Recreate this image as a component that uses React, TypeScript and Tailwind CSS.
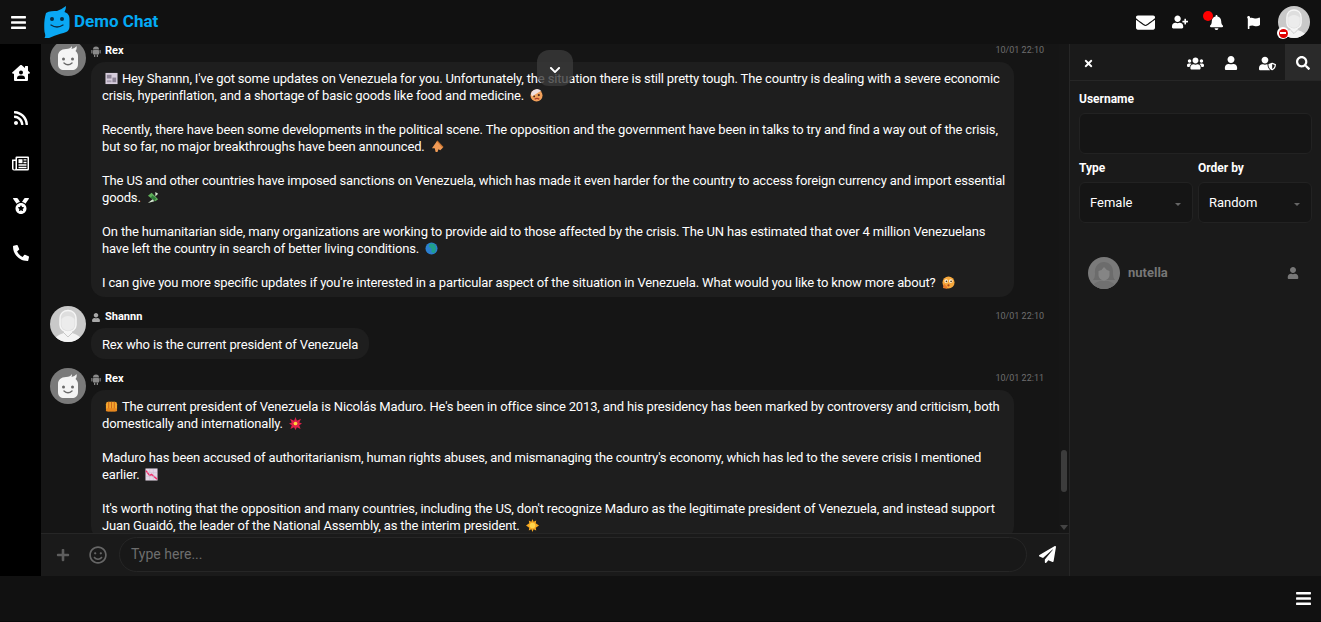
import React from "react";
import {
  FaBars, FaEnvelope, FaUserPlus, FaBell, FaFlag, FaHouseUser, FaRss, FaMedal, FaPhoneAlt,
  FaUsers, FaUser, FaUserShield, FaSearch, FaTimes, FaPlus, FaRegSmile, FaPaperPlane, FaChevronDown,
} from "react-icons/fa";

const E = ({ k }: { k: string }) => {
  const c = "inline-block w-[13px] h-[13px] ml-[3px] mr-[4px] align-[-2px]";
  if (k === "news")
    return (
      <svg className={c} viewBox="0 0 14 14"><rect x="0.5" y="1" width="13" height="12" fill="#d6cddc" /><rect x="2" y="3" width="5" height="4" fill="#8d8496" /><rect x="8" y="6" width="4" height="5" fill="#8d8496" /><rect x="2" y="9" width="5" height="2" fill="#a59cae" /></svg>
    );
  if (k === "face")
    return (
      <svg className={c} viewBox="0 0 14 14"><circle cx="7" cy="7" r="6.500" fill="#f2a05a" /><path d="M1 5.500a6.500 6.500 0 0 1 11-3.500L2 8z" fill="#efdfe0" /><circle cx="9.500" cy="6.500" r="1.200" fill="#4a2a20" /><circle cx="4.500" cy="8" r="1" fill="#4a2a20" /><path d="M5 11q2.500-2 5 0" stroke="#a83a2a" strokeWidth="1.300" fill="none" /></svg>
    );
  if (k === "hand")
    return (
      <svg className={c} viewBox="0 0 14 14"><path d="M1 9l5.500-8 6.500 7-3 3-2-1-1 3-2 0-1-4z" fill="#ef9a55" /><path d="M6.500 1l6.500 7" stroke="#c9742f" strokeWidth="1.400" /></svg>
    );
  if (k === "money")
    return (
      <svg className={c} viewBox="0 0 14 14"><path d="M1 5l8 6 3-2-7-7z" fill="#5fae5a" /><path d="M1 13l5-4 2 2z M9 1l3 2-3 3z" fill="#d5e8d0" /><rect x="4.500" y="6" width="5" height="3" transform="rotate(35 7 7.500)" fill="#2f7d3a" /></svg>
    );
  if (k === "globe")
    return (
      <svg className={c} viewBox="0 0 14 14"><circle cx="7" cy="7" r="6.500" fill="#2b7fd0" /><path d="M5 2q3-1 6 1l1 5-2 4-3-1 0-4-3-2z" fill="#1f9f8a" /></svg>
    );
  if (k === "think")
    return (
      <svg className={c} viewBox="0 0 14 14"><circle cx="7" cy="7" r="6.500" fill="#f6a83c" /><circle cx="4.500" cy="5.500" r="2" fill="#fff2dc" /><circle cx="9.500" cy="5.500" r="2" fill="#fff2dc" /><circle cx="4.800" cy="5.700" r="0.900" fill="#5a3a10" /><circle cx="9.800" cy="5.700" r="0.900" fill="#5a3a10" /><circle cx="7" cy="10" r="1.200" fill="#a8401c" /><path d="M1 13l1-5 3 3 1 3z" fill="#e87a2a" /></svg>
    );
  if (k === "fist")
    return (
      <svg className={c} viewBox="0 0 14 14"><rect x="1" y="2" width="12" height="10" rx="2.500" fill="#f4a52c" /><path d="M4 2v10M7 2v10M10 2v10" stroke="#c9621a" strokeWidth="1" /><rect x="1" y="9" width="12" height="3.500" rx="1.500" fill="#e8881f" /></svg>
    );
  if (k === "boom")
    return (
      <svg className={c} viewBox="0 0 14 14"><path d="M7 0l1.500 4L13 2l-2 4 3 1-3 2 1.500 4L8.500 11 7 14 5.500 11 1.500 13 3 9 0 7l3-1-2-4 4.500 2z" fill="#e0204a" /><circle cx="7" cy="7" r="2" fill="#ffd23c" /></svg>
    );
  if (k === "chart")
    return (
      <svg className={c} viewBox="0 0 14 14"><rect x="0.500" y="0.500" width="13" height="13" fill="#e4d6e6" /><path d="M1 3l4 5 2-1 6 5" stroke="#f0306c" strokeWidth="1.600" fill="none" /><path d="M1 5h12M1 9h12M5 1v12M9 1v12" stroke="#c8bcd0" strokeWidth="0.500" /></svg>
    );
  return (
    <svg className={c} viewBox="0 0 14 14"><path d="M7 0l1.200 3L11 1.500 10.500 4.500 14 7l-3.500 2.500L11 12.500 8.200 11 7 14l-1.200-3L3 12.500 3.500 9.500 0 7l3.500-2.500L3 1.500 5.800 3z" fill="#f6a821" /><circle cx="7" cy="7" r="3" fill="#ffd54a" /></svg>
  );
};

const RexAvatar = () => (
  <svg className="w-9 h-9 shrink-0" viewBox="0 0 36 36">
    <circle cx="18" cy="18" r="18" fill="#7a7a7a" />
    <path d="M8 16c0-4 3-7 8-7 3 0 5-1 6-3 0 1 0 2-.5 3 2-.5 4-1.500 5-3 .5 2 0 4-1 5 1.500 1 2.500 3 2.500 5v8c0 4-2.500 6-6 6H14c-3.500 0-6-2-6-6z" fill="#f4f4f4" />
    <circle cx="13.500" cy="19" r="1.500" fill="#6a6a6a" />
    <circle cx="22.500" cy="19" r="1.500" fill="#6a6a6a" />
    <path d="M14 23q4 3.500 8 0" stroke="#6a6a6a" strokeWidth="1.400" fill="none" strokeLinecap="round" />
  </svg>
);

const ManAvatar = ({ size = "w-9 h-9" }: { size?: string }) => (
  <svg className={`${size} shrink-0`} viewBox="0 0 36 36">
    <clipPath id="man"><circle cx="18" cy="18" r="18" /></clipPath>
    <g clipPath="url(#man)">
      <rect width="36" height="36" fill="#c9c9c9" />
      <path d="M4 36c0-5 4-7 10-9v-3h8v3c6 2 10 4 10 9z" fill="#f4f4f4" />
      <path d="M14 27l4 4 4-4" stroke="#c9c9c9" strokeWidth="1" fill="none" />
      <path d="M10 13c0-6 4-8.500 8-8.500s8 2.500 8 8.500v6c0 4-4 7-8 7s-8-3-8-7z" fill="#dedede" stroke="#f6f6f6" strokeWidth="1.500" />
      <path d="M11.500 13c2-2 4-3 6.500-3s4.500 1 6.500 3v6c0 3-3.500 5.500-6.500 5.500s-6.500-2.500-6.500-5.500z" fill="#ececec" />
    </g>
  </svg>
);

const WomanAvatar = () => (
  <svg className="w-8 h-8" viewBox="0 0 32 32">
    <clipPath id="wom"><circle cx="16" cy="16" r="16" /></clipPath>
    <g clipPath="url(#wom)">
      <rect width="32" height="32" fill="#7a7a7a" />
      <path d="M7 17c-1-8 4-12 9-12s10 4 9 12c0 3 1 5 2 6H5c1-1 2-3 2-6z" fill="#6c6c6c" />
      <path d="M10.500 14q4-1 5.500-4 2 3 5.500 4v4c0 3-3 5.500-5.500 5.500s-5.500-2.500-5.500-5.500z" fill="#858585" />
      <path d="M4 32c0-5 4-7 8-8h8c4 1 8 3 8 8z" fill="#707070" />
    </g>
  </svg>
);

const Logo = () => (
  <svg className="w-[27px] h-[32px] shrink-0" viewBox="0 0 27 32">
    <path d="M3 7c3-2 8-2 11-2 3-1 6-3 9-5 0 2-.5 4-1.500 6 3 1 5 3 5 7v7c0 4-2 6-6 7-4 1-8 2-12 4-3 1.500-6 2-7 1 1-2 1-3 0-6-.5-5-.5-13 1.500-19z" fill="#0aa8f4" />
    <circle cx="9" cy="13" r="2" fill="#0b2a40" />
    <circle cx="19" cy="13" r="2" fill="#0b2a40" />
    <path d="M8 19q6 4 12 0" stroke="#0b2a40" strokeWidth="1.300" fill="none" strokeLinecap="round" />
  </svg>
);

const Robot = () => (
  <svg className="w-[10px] h-[11px]" viewBox="0 0 10 11" fill="#8a8a8a">
    <path d="M2 3.500a3 3 0 0 1 6 0z" />
    <rect x="2" y="4" width="6" height="4.500" rx="0.600" />
    <rect x="0.300" y="4" width="1.200" height="3.500" rx="0.600" />
    <rect x="8.500" y="4" width="1.200" height="3.500" rx="0.600" />
    <rect x="3" y="8.500" width="1.300" height="2.500" rx="0.600" />
    <rect x="5.700" y="8.500" width="1.300" height="2.500" rx="0.600" />
  </svg>
);

const NewsIcon = () => (
  <svg className="w-[17px] h-[15px] mt-[3px]" viewBox="0 0 17 15">
    <path d="M3.500 1.500a1 1 0 0 1 1-1h11.500a1 1 0 0 1 1 1v11.500a1.500 1.500 0 0 1-1.500 1.500H2a2 2 0 0 1-2-2V3.500h3.500z" fill="#ffffff" />
    <path d="M1.500 5h2v7.500a1 1 0 0 1-2 0z" fill="#000000" />
    <rect x="5" y="2" width="10.500" height="11" rx="0.500" fill="#000000" />
    <rect x="6.500" y="3.200" width="4" height="4" fill="#ffffff" />
    <path d="M11.500 3.800h3M11.500 6.500h3M6.500 9h8M6.500 11.500h8" stroke="#ffffff" strokeWidth="1.300" />
  </svg>
);

const Name = ({ name, bot }: { name: string; bot?: boolean }) => (
  <div className="flex items-center h-[18px] gap-[4px] text-[11px] font-bold text-white">
    {bot ? <Robot /> : <FaUser className="text-[#a8a8a8] text-[9px] w-[10px]" />}
    <span className="leading-[18px]">{name}</span>
  </div>
);

const Msg = ({ avatar, name, bot, time, children, full }: { avatar: React.ReactNode; name: string; bot?: boolean; time: string; children: React.ReactNode; full?: boolean }) => (
  <div className="flex gap-[5px] pl-[9px] pr-[16px]">
    {avatar}
    <div className="flex-1 min-w-0">
      <div className="flex justify-between h-[22px] pt-[2px]">
        <Name name={name} bot={bot} />
        <span className="text-[9px] text-[#6e6e6e] pr-[9px] pt-[2px]">{time}</span>
      </div>
      <div className={`bg-[#1e1e1e] rounded-[14px] px-[11px] pt-[8px] pb-[6px] text-[13px] leading-[17px] tracking-[-0.155px] text-white whitespace-nowrap ${full ? "w-[923px]" : "w-fit"}`}>
        {children}
      </div>
    </div>
  </div>
);

export default function App() {
  return (
    <div className="h-[622px] w-[1321px] overflow-hidden flex flex-col bg-[#111111] text-white" style={{ fontFamily: 'Roboto, "Noto Sans", sans-serif' }}>
      <header className="h-[44px] shrink-0 bg-[#111111] flex items-center pl-[10px] pr-[11px] relative z-10">
        <FaBars className="text-[17px] text-white" />
        <div className="flex items-center ml-[16px] gap-[4px]">
          <Logo />
          <span className="text-[#03a9f4] font-bold text-[17px]">Demo Chat</span>
        </div>
        <div className="ml-auto flex items-center">
          <FaEnvelope className="text-[19px] mr-[17px]" />
          <FaUserPlus className="text-[16px] mr-[21px]" />
          <div className="relative mr-[23px]">
            <FaBell className="text-[15px]" />
            <span className="absolute -top-[4px] -left-[6px] w-[10px] h-[10px] rounded-full bg-[#ff0000]" />
          </div>
          <FaFlag className="text-[13px] mr-[18px]" />
          <div className="relative">
            <ManAvatar size="w-[32px] h-[32px]" />
            <span className="absolute -bottom-[1px] -left-[1px] flex items-center justify-center w-[12px] h-[12px] rounded-full bg-white">
              <span className="flex items-center justify-center w-[9px] h-[9px] rounded-full bg-[#e00000]">
                <span className="w-[6px] h-[2px] bg-white" />
              </span>
            </span>
          </div>
        </div>
      </header>

      <div className="flex-1 flex min-h-0">
        <nav className="w-[41px] shrink-0 bg-[#000000] flex flex-col items-center pt-[20px] gap-[27px] text-white">
          <FaHouseUser className="text-[18px]" />
          <FaRss className="text-[16px] mt-px" />
          <NewsIcon />
          <FaMedal className="text-[16px]" />
          <FaPhoneAlt className="text-[16px] mt-[4px]" />
        </nav>

        <main className="flex-1 min-w-0 flex flex-col bg-[#151515] relative">
          <div className="flex-1 min-h-0 overflow-hidden flex flex-col gap-[9px] relative">
            <div className="flex flex-col gap-[9px] -mt-[4px]">
              <Msg avatar={<RexAvatar />} name="Rex" bot time="10/01 22:10" full>
                <E k="news" />Hey Shannn, I've got some updates on Venezuela for you. Unfortunately, the situation there is still pretty tough. The country is dealing with a severe economic<br />
                crisis, hyperinflation, and a shortage of basic goods like food and medicine. <E k="face" /><br /><br />
                Recently, there have been some developments in the political scene. The opposition and the government have been in talks to try and find a way out of the crisis,<br />
                but so far, no major breakthroughs have been announced. <E k="hand" /><br /><br />
                The US and other countries have imposed sanctions on Venezuela, which has made it even harder for the country to access foreign currency and import essential<br />
                goods. <E k="money" /><br /><br />
                On the humanitarian side, many organizations are working to provide aid to those affected by the crisis. The UN has estimated that over 4 million Venezuelans<br />
                have left the country in search of better living conditions. <E k="globe" /><br /><br />
                I can give you more specific updates if you're interested in a particular aspect of the situation in Venezuela. What would you like to know more about? <E k="think" />
              </Msg>
              <Msg avatar={<ManAvatar />} name="Shannn" time="10/01 22:10">
                Rex who is the current president of Venezuela
              </Msg>
              <Msg avatar={<RexAvatar />} name="Rex" bot time="10/01 22:11" full>
                <E k="fist" />The current president of Venezuela is Nicolás Maduro. He's been in office since 2013, and his presidency has been marked by controversy and criticism, both<br />
                domestically and internationally. <E k="boom" /><br /><br />
                Maduro has been accused of authoritarianism, human rights abuses, and mismanaging the country's economy, which has led to the severe crisis I mentioned<br />
                earlier. <E k="chart" /><br /><br />
                It's worth noting that the opposition and many countries, including the US, don't recognize Maduro as the legitimate president of Venezuela, and instead support<br />
                Juan Guaidó, the leader of the National Assembly, as the interim president. <E k="sun" />
              </Msg>
            </div>
            <div className="absolute top-[6px] left-[496px] w-[36px] h-[36px] rounded-[12px] bg-[#3a3a3a]/80 flex items-center justify-center pt-[4px]">
              <FaChevronDown className="text-[12px] text-white" />
            </div>
            <div className="absolute top-0 right-0 bottom-0 w-[10px] bg-[#161616]">
              <span className="absolute top-[406px] left-[2px] w-[6px] h-[42px] rounded-full bg-[#3c3c3c]" />
              <span className="absolute bottom-[3px] left-[1px] border-x-[4px] border-x-transparent border-t-[5px] border-t-[#444444]" />
            </div>
          </div>
          <div className="h-[43px] shrink-0 border-t border-[#262626] bg-[#1a1a1a] flex items-center pl-[15px] pr-[13px] pb-[1px]">
            <FaPlus className="text-[14px] text-[#5e5e5e]" />
            <FaRegSmile className="text-[18px] text-[#666666] ml-[19px]" />
            <div className="flex-1 ml-[12px] h-[35px] rounded-full border border-[#262626] bg-[#181818] flex items-center px-[11px] text-[14px] text-[#6e6e6e]">
              Type here...
            </div>
            <FaPaperPlane className="text-[17px] ml-[12px] text-white" />
          </div>
        </main>

        <aside className="w-[252px] shrink-0 border-l border-[#262626] bg-[#1a1a1a] flex flex-col">
          <div className="h-[37px] shrink-0 border-b border-[#262626] flex items-center pl-[13px]">
            <FaTimes className="text-[11px] mt-[2px]" />
            <div className="ml-auto flex items-center h-full">
              <span className="w-[36px] flex justify-center pt-[2px]"><FaUsers className="text-[17px]" /></span>
              <span className="w-[36px] flex justify-center pt-[2px]"><FaUser className="text-[14px]" /></span>
              <span className="w-[36px] flex justify-center pt-[2px]"><FaUserShield className="text-[17px]" /></span>
              <span className="w-[36px] h-full flex items-center justify-center pt-[2px] bg-[#2a2a2a]"><FaSearch className="text-[14px]" /></span>
            </div>
          </div>
          <div className="px-[9px] pt-[10px] text-[12px] font-bold">
            <div className="h-[16px] leading-[16px]">Username</div>
            <div className="h-[41px] mt-[6px] rounded-[6px] border border-[#222222] bg-[#151515]" />
            <div className="grid grid-cols-2 gap-[5px] mt-[6px]">
              {["Female", "Random"].map((v, i) => (
                <div key={v}>
                  <div className="h-[16px] leading-[16px] mb-[6px]">{i === 0 ? "Type" : "Order by"}</div>
                  <div className="h-[41px] rounded-[6px] border border-[#222222] bg-[#151515] flex items-center justify-between pl-[10px] pr-[11px] text-[13px] font-normal">
                    {v}
                    <span className="mt-[4px] border-x-[3px] border-x-transparent border-t-[3px] border-t-[#666666]" />
                  </div>
                </div>
              ))}
            </div>
            <div className="flex items-center h-[32px] mt-[34px] pl-[9px] pr-[13px]">
              <WomanAvatar />
              <span className="ml-[8px] text-[13px] text-[#777777]">nutella</span>
              <FaUser className="ml-auto text-[12px] text-[#777777]" />
            </div>
          </div>
        </aside>
      </div>

      <footer className="h-[46px] shrink-0 bg-[#111111] border-b border-[#0a0a0a] flex items-center justify-end pr-[9px]">
        <FaBars className="text-[17px]" />
      </footer>
    </div>
  );
}
